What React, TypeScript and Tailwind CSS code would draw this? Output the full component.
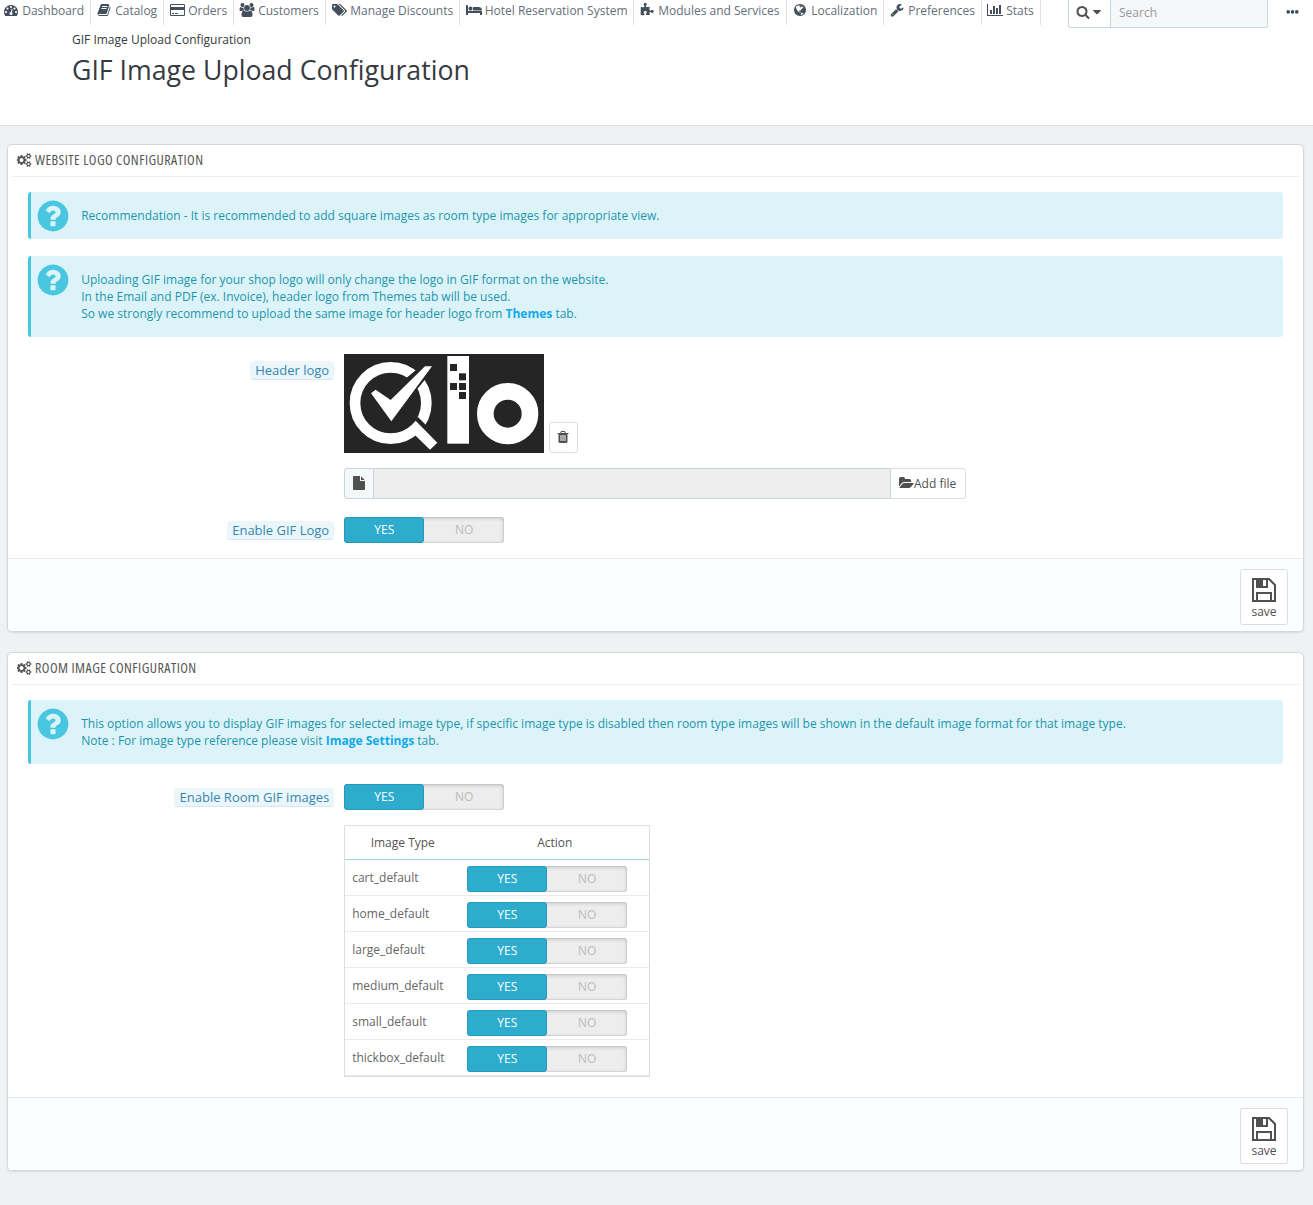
import type { ReactNode } from 'react';

const ICONS = {
  dashboard: { w: 1792, d: "M384 1152q0-53-37.5-90.5t-90.5-37.5-90.5 37.5-37.5 90.5 37.5 90.5 90.5 37.5 90.5-37.5 37.5-90.5zm192-448q0-53-37.5-90.5t-90.5-37.5-90.5 37.5-37.5 90.5 37.5 90.5 90.5 37.5 90.5-37.5 37.5-90.5zm428 481l101-382q6-26-7.5-48.5t-38.5-29.5-48 6.5-30 39.5l-101 382q-60 5-107 43.5t-63 98.5q-20 77 20 146t117 89 146-20 89-117q16-60-6-117t-72-91zm660-33q0-53-37.5-90.5t-90.5-37.5-90.5 37.5-37.5 90.5 37.5 90.5 90.5 37.5 90.5-37.5 37.5-90.5zm-640-640q0-53-37.5-90.5t-90.5-37.5-90.5 37.5-37.5 90.5 37.5 90.5 90.5 37.5 90.5-37.5 37.5-90.5zm448 192q0-53-37.5-90.5t-90.5-37.5-90.5 37.5-37.5 90.5 37.5 90.5 90.5 37.5 90.5-37.5 37.5-90.5zm320 448q0 261-141 483-19 29-54 29h-1402q-35 0-54-29-141-221-141-483 0-182 71-348t191-286 286-191 348-71 348 71 286 191 191 286 71 348z" },
  book: { w: 1792, d: "M1703 478q40 57 18 129l-275 906q-19 64-76.5 107.5t-122.5 43.5h-923q-77 0-148.5-53.5t-99.5-131.5q-24-67-2-127 0-4 3-27t4-37q1-8-3-21.5t-3-19.5q2-11 8-21t16.5-23.5 16.5-23.5q23-38 45-91.5t30-91.5q3-10 .5-30t-.5-28q3-11 17-28t17-23q21-36 42-92t25-90q1-9-2.5-32t.5-28q4-13 22-30.5t22-22.5q19-26 42.5-84.5t27.5-96.5q1-8-3-25.5t-2-26.5q2-8 9-18t18-23 17-21q8-12 16.5-30.5t15-35 16-36 19.5-32 26.5-23.5 36-11.5 47.5 5.5l-1 3q38-9 51-9h761q74 0 114 56t18 130l-274 906q-36 119-71.5 153.5t-128.5 34.5h-869q-27 0-38 15-11 16-1 43 24 70 144 70h923q29 0 56-15.5t35-41.5l300-987q7-22 5-57 38 15 59 43zm-1064 2q-4 13 2 22.5t20 9.5h608q13 0 25.5-9.5t16.5-22.5l21-64q4-13-2-22.5t-20-9.5h-608q-13 0-25.5 9.5t-16.5 22.5zm-83 256q-4 13 2 22.5t20 9.5h608q13 0 25.5-9.5t16.5-22.5l21-64q4-13-2-22.5t-20-9.5h-608q-13 0-25.5 9.5t-16.5 22.5z" },
  card: { w: 1920, d: "M1760 128q66 0 113 47t47 113v1216q0 66-47 113t-113 47h-1600q-66 0-113-47t-47-113v-1216q0-66 47-113t113-47h1600zm-1600 128q-13 0-22.5 9.5t-9.5 22.5v224h1664v-224q0-13-9.5-22.5t-22.5-9.5h-1600zm1600 1280q13 0 22.5-9.5t9.5-22.5v-608h-1664v608q0 13 9.5 22.5t22.5 9.5h1600zm-1504-128v-128h256v128h-256zm384 0v-128h384v128h-384z" },
  users: { w: 2048, d: "M657 896q-162 5-265 128h-134q-82 0-138-40.5t-56-118.5q0-353 124-353 6 0 43.5 21t97.5 42.5 119 21.5q67 0 133-23-5 37-5 66 0 159 90 287zm1071 637q0 120-73 189.5t-194 69.5h-874q-121 0-194-69.5t-73-189.5q0-53 3.5-103.5t14-109 26.5-108.5 43-97.5 62-81 85.5-53.5 111.5-20q10 0 43 21.5t73 48 107 48 135 21.5 135-21.5 107-48 73-48 43-21.5q61 0 111.5 20t85.5 53.5 62 81 43 97.5 26.5 108.5 14 109 3.5 103.5zm-1024-1277q0 106-75 181t-181 75-181-75-75-181 75-181 181-75 181 75 75 181zm704 384q0 159-112.5 271.5t-271.5 112.5-271.5-112.5-112.5-271.5 112.5-271.5 271.5-112.5 271.5 112.5 112.5 271.5zm576 225q0 78-56 118.5t-138 40.5h-134q-103-123-265-128 90-128 90-287 0-29-5-66 66 23 133 23 59 0 119-21.5t97.5-42.5 43.5-21q124 0 124 353zm-128-609q0 106-75 181t-181 75-181-75-75-181 75-181 181-75 181 75 75 181z" },
  tags: { w: 1920, d: "M448 448q0-53-37.5-90.5t-90.5-37.5-90.5 37.5-37.5 90.5 37.5 90.5 90.5 37.5 90.5-37.5 37.5-90.5zm1067 576q0 53-37 90l-491 492q-39 37-91 37-53 0-90-37l-715-716q-38-37-64.5-101t-26.5-117v-416q0-52 38-90t90-38h416q53 0 117 26.5t102 64.5l715 714q37 39 37 91zm384 0q0 53-37 90l-491 492q-39 37-91 37-36 0-59-14t-53-45l470-470q37-37 37-90 0-52-37-91l-715-714q-38-38-102-64.5t-117-26.5h224q53 0 117 26.5t102 64.5l715 714q37 39 37 91z" },
  bed: { w: 2048, d: "M256 1024h1728q26 0 45 19t19 45v448h-256v-256h-1536v256h-256v-1216q0-26 19-45t45-19h128q26 0 45 19t19 45v704zm576-320q0-106-75-181t-181-75-181 75-75 181 75 181 181 75 181-75 75-181zm1216 256v-64q0-159-112.5-271.5t-271.5-112.5h-704q-26 0-45 19t-19 45v384h1152z" },
  puzzle: { w: 1792, d: "M1755 1083q0 81-44.5 135t-123.5 54q-41 0-77.5-17.5t-59-38-56.5-38-71-17.5q-110 0-110 124 0 39 16 115t15 115v5q-22 0-33 1-34 3-97.5 11.5t-115.5 13.5-98 5q-61 0-103-26.5t-42-83.5q0-37 17.5-71t38-56.5 38-59 17.5-77.5q0-79-54-123.5t-135-44.5q-84 0-143 45.5t-59 127.5q0 43 15 83t33.5 64.5 33.5 53 15 50.5q0 45-46 89-37 35-117 35-95 0-245-24-9-2-27.5-4t-27.5-4l-13-2q-1 0-3-1-2 0-2-1v-1024q2 1 17.5 3.5t34 5 21.5 3.5q150 24 245 24 80 0 117-35 46-44 46-89 0-22-15-50.5t-33.5-53-33.5-64.5-15-83q0-82 59-127.5t144-45.5q80 0 134 44.5t54 123.5q0 41-17.5 77.5t-38 59-38 56.5-17.5 71q0 57 42 83.5t103 26.5q64 0 180-15t163-17v2q-1 2-3.5 17.5t-5 34-3.5 21.5q-24 150-24 245 0 80 35 117 44 46 89 46 22 0 50.5-15t53-33.5 64.5-33.5 83-15q82 0 127.5 59t45.5 143z" },
  globe: { w: 1792, d: "M896 128q209 0 385.5 103t279.5 279.5 103 385.5-103 385.5-279.5 279.5-385.5 103-385.5-103-279.5-279.5-103-385.5 103-385.5 279.5-279.5 385.5-103zm274 521q-2 1-9.5 9.5t-13.5 9.5q2 0 4.5-5t5-11 3.5-7q6-7 22-15 14-6 52-12 34-8 51 11-2-2 9.5-13t14.5-12q3-2 15-4.5t15-7.5l2-22q-12 1-17.5-7t-6.5-21q0 2-6 8 0-7-4.5-8t-11.5 1-9 1q-10-3-15-7.5t-8-16.5-4-15q-2-5-9.5-11t-9.5-10q-1-2-2.5-5.5t-3-6.5-4-5.5-5.5-2.5-7 5-7.5 10-4.5 5q-3-2-6-1.5t-4.5 1-4.5 3-5 3.5q-3 2-8.5 3t-8.5 2q15-5-1-11-10-4-16-3 9-4 7.5-12t-8.5-14h5q-1-4-8.5-8.5t-17.5-8.5-13-6q-8-5-34-9.5t-33-.5q-5 6-4.5 10.5t4 14 3.5 12.5q1 6-5.5 13t-6.5 12q0 7 14 15.5t10 21.5q-3 8-16 16t-16 12q-5 8-1.5 18.5t10.5 16.5q2 2 1.5 4t-3.5 4.5-5.5 4-6.5 3.5l-3 2q-11 5-20.5-6t-13.5-26q-7-25-16-30-23-8-29 1-5-13-41-26-25-9-58-4 6-1 0-15-7-15-19-12 3-6 4-17.5t1-13.5q3-13 12-23 1-1 7-8.5t9.5-13.5.5-6q35 4 50-11 5-5 11.5-17t10.5-17q9-6 14-5.5t14.5 5.5 14.5 5q14 1 15.5-11t-7.5-20q12 1 3-17-4-7-8-9-12-4-27 5-8 4 2 8-1-1-9.5 10.5t-16.5 17.5-16-5q-1-1-5.5-13.5t-9.5-13.5q-8 0-16 15 3-8-11-15t-24-8q19-12-8-27-7-4-20.5-5t-19.5 4q-5 7-5.5 11.5t5 8 10.5 5.5 11.5 4 8.5 3q14 10 8 14-2 1-8.5 3.5t-11.5 4.5-6 4q-3 4 0 14t-2 14q-5-5-9-17.5t-7-16.5q7 9-25 6l-10-1q-4 0-16 2t-20.5 1-13.5-8q-4-8 0-20 1-4 4-2-4-3-11-9.5t-10-8.5q-46 15-94 41 6 1 12-1 5-2 13-6.5t10-5.5q34-14 42-7l5-5q14 16 20 25-7-4-30-1-20 6-22 12 7 12 5 18-4-3-11.5-10t-14.5-11-15-5q-16 0-22 1-146 80-235 222 7 7 12 8 4 1 5 9t2.5 11 11.5-3q9 8 3 19 1-1 44 27 19 17 21 21 3 11-10 18-1-2-9-9t-9-4q-3 5 .5 18.5t10.5 12.5q-7 0-9.5 16t-2.5 35.5-1 23.5l2 1q-3 12 5.5 34.5t21.5 19.5q-13 3 20 43 6 8 8 9 3 2 12 7.5t15 10 10 10.5q4 5 10 22.5t14 23.5q-2 6 9.5 20t10.5 23q-1 0-2.5 1t-2.5 1q3 7 15.5 14t15.5 13q1 3 2 10t3 11 8 2q2-20-24-62-15-25-17-29-3-5-5.5-15.5t-4.5-14.5q2 0 6 1.5t8.5 3.5 7.5 4 2 3q-3 7 2 17.5t12 18.5 17 19 12 13q6 6 14 19.5t0 13.5q9 0 20 10.5t17 19.5q5 8 8 26t5 24q2 7 8.5 13.5t12.5 9.5l16 8 13 7q5 2 18.5 10.5t21.5 11.5q10 4 16 4t14.5-2.5 13.5-3.5q15-2 29 15t21 21q36 19 55 11-2 1 .5 7.5t8 15.5 9 14.5 5.5 8.5q5 6 18 15t18 15q6-4 7-9-3 8 7 20t18 10q14-3 14-32-31 15-49-18 0-1-2.5-5.5t-4-8.5-2.5-8.5 0-7.5 5-3q9 0 10-3.5t-2-12.5-4-13q-1-8-11-20t-12-15q-5 9-16 8t-16-9q0 1-1.5 5.5t-1.5 6.5q-13 0-15-1 1-3 2.5-17.5t3.5-22.5q1-4 5.5-12t7.5-14.5 4-12.5-4.5-9.5-17.5-2.5q-19 1-26 20-1 3-3 10.5t-5 11.5-9 7q-7 3-24 2t-24-5q-13-8-22.5-29t-9.5-37q0-10 2.5-26.5t3-25-5.5-24.5q3-2 9-9.5t10-10.5q2-1 4.5-1.5t4.5 0 4-1.5 3-6q-1-1-4-3-3-3-4-3 7 3 28.5-1.5t27.5 1.5q15 11 22-2 0-1-2.5-9.5t-.5-13.5q5 27 29 9 3 3 15.5 5t17.5 5q3 2 7 5.5t5.5 4.5 5-.5 8.5-6.5q10 14 12 24 11 40 19 44 7 3 11 2t4.5-9.5 0-14-1.5-12.5l-1-8v-18l-1-8q-15-3-18.5-12t1.5-18.5 15-18.5q1-1 8-3.5t15.5-6.5 12.5-8q21-19 15-35 7 0 11-9-1 0-5-3t-7.5-5-4.5-2q9-5 2-16 5-3 7.5-11t7.5-10q9 12 21 2 8-8 1-16 5-7 20.5-10.5t18.5-9.5q7 2 8-2t1-12 3-12q4-5 15-9t13-5l17-11q3-4 0-4 18 2 31-11 10-11-6-20 3-6-3-9.5t-15-5.5q3-1 11.5-.5t10.5-1.5q15-10-7-16-17-5-43 12zm-163 877q206-36 351-189-3-3-12.5-4.5t-12.5-3.5q-18-7-24-8 1-7-2.5-13t-8-9-12.5-8-11-7q-2-2-7-6t-7-5.5-7.5-4.5-8.5-2-10 1l-3 1q-3 1-5.5 2.5t-5.5 3-4 3 0 2.5q-21-17-36-22-5-1-11-5.5t-10.5-7-10-1.5-11.5 7q-5 5-6 15t-2 13q-7-5 0-17.5t2-18.5q-3-6-10.5-4.5t-12 4.5-11.5 8.5-9 6.5-8.5 5.5-8.5 7.5q-3 4-6 12t-5 11q-2-4-11.5-6.5t-9.5-5.5q2 10 4 35t5 38q7 31-12 48-27 25-29 40-4 22 12 26 0 7-8 20.5t-7 21.5q0 6 2 16z" },
  wrench: { w: 1792, d: "M448 1472q0-26-19-45t-45-19-45 19-19 45 19 45 45 19 45-19 19-45zm644-420l-682 682q-37 37-90 37-52 0-91-37l-106-108q-38-36-38-90 0-53 38-91l681-681q39 98 114.5 173.5t173.5 114.5zm634-435q0 39-23 106-47 134-164.5 217.5t-258.5 83.5q-185 0-316.5-131.5t-131.5-316.5 131.5-316.5 316.5-131.5q58 0 121.5 16.5t107.5 46.5q16 11 16 28t-16 28l-293 169v224l193 107q5-3 79-48.5t135.5-81 70.5-35.5q15 0 23.5 10t8.5 25z" },
  chart: { w: 2048, d: "M640 896v512h-256v-512h256zm384-512v1024h-256v-1024h256zm1024 1152v128h-2048v-1536h128v1408h1920zm-640-896v768h-256v-768h256zm384-384v1152h-256v-1152h256z" },
  search: { w: 1792, d: "M1216 832q0-185-131.5-316.5t-316.5-131.5-316.5 131.5-131.5 316.5 131.5 316.5 316.5 131.5 316.5-131.5 131.5-316.5zm512 832q0 52-38 90t-90 38q-54 0-90-38l-343-342q-179 124-399 124-143 0-273.5-55.5t-225-150-150-225-55.5-273.5 55.5-273.5 150-225 225-150 273.5-55.5 273.5 55.5 225 150 150 225 55.5 273.5q0 220-124 399l343 343q37 37 37 90z" },
  caret: { w: 1792, d: "M1408 704q0 26-19 45l-448 448q-19 19-45 19t-45-19l-448-448q-19-19-19-45t19-45 45-19h896q26 0 45 19t19 45z" },
  ellipsis: { w: 1792, d: "M576 736v192q0 40-28 68t-68 28h-192q-40 0-68-28t-28-68v-192q0-40 28-68t68-28h192q40 0 68 28t28 68zm512 0v192q0 40-28 68t-68 28h-192q-40 0-68-28t-28-68v-192q0-40 28-68t68-28h192q40 0 68 28t28 68zm512 0v192q0 40-28 68t-68 28h-192q-40 0-68-28t-28-68v-192q0-40 28-68t68-28h192q40 0 68 28t28 68z" },
  cogs: { w: 1920, d: "M832 896q0-106-75-181t-181-75-181 75-75 181 75 181 181 75 181-75 75-181zm768 512q0-52-38-90t-90-38-90 38-38 90q0 53 37.5 90.5t90.5 37.5 90.5-37.5 37.5-90.5zm0-1024q0-52-38-90t-90-38-90 38-38 90q0 53 37.5 90.5t90.5 37.5 90.5-37.5 37.5-90.5zm-384 421v185q0 10-7 19.5t-16 10.5l-155 24q-11 35-32 76 34 48 90 115 7 11 7 20 0 12-7 19-23 30-82.5 89.5t-78.5 59.5q-11 0-21-7l-115-90q-37 19-77 31-11 108-23 155-7 24-30 24h-186q-11 0-20-7.5t-10-17.5l-23-153q-34-10-75-31l-118 89q-7 7-20 7-11 0-21-8-144-133-144-160 0-9 7-19 10-14 41-53t47-61q-23-44-35-82l-152-24q-10-1-17-9.5t-7-19.5v-185q0-10 7-19.5t16-10.5l155-24q11-35 32-76-34-48-90-115-7-11-7-20 0-12 7-20 22-30 82-89t79-59q11 0 21 7l115 90q34-18 77-32 11-108 23-154 7-24 30-24h186q11 0 20 7.5t10 17.5l23 153q34 10 75 31l118-89q8-7 20-7 11 0 21 8 144 133 144 160 0 8-7 19-12 16-42 54t-45 60q23 48 34 82l152 23q10 2 17 10.5t7 19.5zm640 533v140q0 16-149 31-12 27-30 52 51 113 51 138 0 4-4 7-122 71-124 71-8 0-46-47t-52-68q-20 2-30 2t-30-2q-14 21-52 68t-46 47q-2 0-124-71-4-3-4-7 0-25 51-138-18-25-30-52-149-15-149-31v-140q0-16 149-31 13-29 30-52-51-113-51-138 0-4 4-7 4-2 35-20t59-34 30-16q8 0 46 46.5t52 67.5q20-2 30-2t30 2q51-71 92-112l6-2q4 0 124 70 4 3 4 7 0 25-51 138 17 23 30 52 149 15 149 31zm0-1024v140q0 16-149 31-12 27-30 52 51 113 51 138 0 4-4 7-122 71-124 71-8 0-46-47t-52-68q-20 2-30 2t-30-2q-14 21-52 68t-46 47q-2 0-124-71-4-3-4-7 0-25 51-138-18-25-30-52-149-15-149-31v-140q0-16 149-31 13-29 30-52-51-113-51-138 0-4 4-7 4-2 35-20t59-34 30-16q8 0 46 46.5t52 67.5q20-2 30-2t30 2q51-71 92-112l6-2q4 0 124 70 4 3 4 7 0 25-51 138 17 23 30 52 149 15 149 31z" },
  question: { w: 1792, d: "M1024 1376v-192q0-14-9-23t-23-9h-192q-14 0-23 9t-9 23v192q0 14 9 23t23 9h192q14 0 23-9t9-23zm256-672q0-88-55.5-163t-138.5-116-170-41q-243 0-371 213-15 24 8 42l132 100q7 6 19 6 16 0 25-12 53-68 86-92 34-24 86-24 48 0 85.5 26t37.5 59q0 38-20 61t-68 45q-63 28-115.5 86.5t-52.5 125.5v36q0 14 9 23t23 9h192q14 0 23-9t9-23q0-19 21.5-49.5t54.5-49.5q32-18 49-28.5t46-35 44.5-48 28-60.5 12.5-81zm384 192q0 209-103 385.5t-279.5 279.5-385.5 103-385.5-103-279.5-279.5-103-385.5 103-385.5 279.5-279.5 385.5-103 385.5 103 279.5 279.5 103 385.5z" },
  trash: { w: 1792, d: "M704 1376v-704q0-14-9-23t-23-9h-64q-14 0-23 9t-9 23v704q0 14 9 23t23 9h64q14 0 23-9t9-23zm256 0v-704q0-14-9-23t-23-9h-64q-14 0-23 9t-9 23v704q0 14 9 23t23 9h64q14 0 23-9t9-23zm256 0v-704q0-14-9-23t-23-9h-64q-14 0-23 9t-9 23v704q0 14 9 23t23 9h64q14 0 23-9t9-23zm-544-992h448l-48-117q-7-9-17-11h-317q-10 2-17 11zm928 32v64q0 14-9 23t-23 9h-96v948q0 83-47 143.5t-113 60.5h-832q-66 0-113-58.5t-47-141.5v-952h-96q-14 0-23-9t-9-23v-64q0-14 9-23t23-9h309l70-167q15-37 54-63t79-26h320q40 0 79 26t54 63l70 167h309q14 0 23 9t9 23z" },
  file: { w: 1792, d: "M1152 512v-472q22 14 36 28l408 408q14 14 28 36h-472zm-128 32q0 40 28 68t68 28h544v1056q0 40-28 68t-68 28h-1344q-40 0-68-28t-28-68v-1600q0-40 28-68t68-28h800v544z" },
  folder: { w: 1920, d: "M1879 952q0 31-31 66l-336 396q-43 51-120.5 86.5t-143.5 35.5h-1088q-34 0-60.5-13t-26.5-43q0-31 31-66l336-396q43-51 120.5-86.5t143.5-35.5h1088q34 0 60.5 13t26.5 43zm-343-344v160h-832q-94 0-197 47.5t-164 119.5l-337 396-5 6q0-4-.5-12.5t-.5-12.5v-960q0-92 66-158t158-66h320q92 0 158 66t66 158v32h544q92 0 158 66t66 158z" },
};

type IconName = keyof typeof ICONS;

const Icon = ({ name, size = 14, className = '' }: { name: IconName; size?: number; className?: string }) => {
  const { w, d } = ICONS[name];
  return (
    <svg viewBox={`0 0 ${w} 1792`} width={(size * w) / 1792} height={size} fill="currentColor" className={`shrink-0 ${className}`}>
      <path d={d} />
    </svg>
  );
};

const NAV: { icon: IconName; label: string; cls: string }[] = [
  { icon: 'dashboard', label: 'Dashboard', cls: 'w-[91px] pl-1' },
  { icon: 'book', label: 'Catalog', cls: 'w-[73px] pl-1.5' },
  { icon: 'card', label: 'Orders', cls: 'w-[70px] pl-1.5' },
  { icon: 'users', label: 'Customers', cls: 'w-[92px] pl-1.5' },
  { icon: 'tags', label: 'Manage Discounts', cls: 'w-[134px] pl-1.5' },
  { icon: 'bed', label: 'Hotel Reservation System', cls: 'w-[174px] pl-[6.5px]' },
  { icon: 'puzzle', label: 'Modules and Services', cls: 'w-[153px] pl-1.5' },
  { icon: 'globe', label: 'Localization', cls: 'w-[97px] pl-1.5' },
  { icon: 'wrench', label: 'Preferences', cls: 'w-[98px] pl-1.5' },
  { icon: 'chart', label: 'Stats', cls: 'w-[59px] pl-1.5' },
];

const IMAGE_TYPES = ['cart_default', 'home_default', 'large_default', 'medium_default', 'small_default', 'thickbox_default'];

const Toggle = () => (
  <div className="flex h-[26px] w-40 rounded-[3px] bg-[#ededed] text-center leading-[25px] shadow-[inset_0_0_0_1px_rgba(0,0,0,0.05),inset_0_1px_4px_rgba(0,0,0,0.2)]">
    <span className="w-20 rounded-[3px] border border-[#2799b8] bg-[#2eacce] pl-[0.5px] leading-[23px] text-white">YES</span>
    <span className="w-20 pl-[0.5px] text-[#bbb]">NO</span>
  </div>
);

const Alert = ({ children }: { children: ReactNode }) => (
  <div className="mx-5 flex rounded-[3px] border-l-[3px] border-[#4ac7e0] bg-[#dcf4f9] text-[#1e94ab]">
    <Icon name="question" size={36} className="mt-1.5 ml-1 text-[#4ac7e0]" />
    <div className="py-[15px] pl-[10.2px] leading-[17px] tracking-[0.005px]">{children}</div>
  </div>
);

const AlertLink = ({ children }: { children: ReactNode }) => <a className="font-bold text-[#12a8ec]">{children}</a>;

const Label = ({ children }: { children: ReactNode }) => (
  <div className="flex w-[326px] shrink-0 justify-end">
    <label className="h-[19px] rounded-[3px] border-b border-[#d3eaf5] bg-[#ebf6fb] pr-[4.8px] pl-[5.2px] text-[13px] leading-[18px] text-[#3586ae]">{children}</label>
  </div>
);

const SaveIcon = () => (
  <svg viewBox="0 0 24 24" width="24" height="24" fill="none" stroke="currentColor" strokeWidth="2">
    <path d="M1 1h16l6 6v16H1z" />
    <path d="M5 1v8h10V1" />
    <path d="M5 1h5v8H5z" fill="currentColor" />
    <path d="M5 23v-8h14v8" />
  </svg>
);

const Panel = ({ title, children }: { title: string; children: ReactNode }) => (
  <section className="overflow-hidden rounded-[5px] border border-[#d3d8db] bg-white shadow-[0_1px_2px_rgba(0,0,0,0.1)]">
    <h3 className="mx-1 flex h-8 items-center gap-[3px] border-b border-[#eaedef] pb-px pl-[5px] text-[#555]">
      <Icon name="cogs" />
      <span className="text-sm leading-none font-medium tracking-[0.46px] whitespace-nowrap [font-stretch:75%]">{title}</span>
    </h3>
    {children}
    <footer className="flex h-[73px] justify-end border-t border-[#e8eaec] bg-[#fcfdfe] pt-2.5 pr-[15px]">
      <button className="flex h-14 w-12 flex-col items-center rounded-[3px] border border-[#ddd] bg-white pt-2 text-[#505050]">
        <SaveIcon />
        <span className="mt-px leading-[17px]">save</span>
      </button>
    </footer>
  </section>
);

// Qlo wordmark: magnifier with a tick, a tower and a ring
const Logo = () => (
  <svg viewBox="0 0 600 297" width="200" height="99" className="shrink-0">
    <rect width="600" height="297" fill="#252525" />
    <circle cx="140" cy="147" r="107" fill="none" stroke="#fff" strokeWidth="32" />
    <path d="M221 188l34 34-14 14-41-20z" fill="#252525" />
    <path d="M215 200l65 66-22 21-43-42-30-12z" fill="#fff" />
    <path d="M186 73l30-25 27-22 40 10-41 42-22 27-18-5z" fill="#252525" />
    <path d="M81 118l14-11 45 31L243 37h21L142 202z" fill="#fff" />
    <rect x="310" y="6" width="65" height="263" fill="#fff" />
    <g fill="#252525">
      <rect x="318" y="30" width="21" height="21" />
      <rect x="345" y="58" width="21" height="21" />
      <rect x="318" y="87" width="21" height="21" />
      <rect x="345" y="87" width="21" height="21" />
      <rect x="345" y="114" width="21" height="21" />
    </g>
    <circle cx="491" cy="179" r="67" fill="none" stroke="#fff" strokeWidth="50" />
  </svg>
);

const TopBar = () => (
  <div className="flex h-7">
    <nav className="flex h-[25px] text-[#656e7a]">
      {NAV.map(({ icon, label, cls }) => (
        <a key={label} className={`flex shrink-0 items-center border-r border-[#e1e1e1] pb-1 whitespace-nowrap ${cls}`}>
          <span className="mr-[3.2px] flex w-[15px] shrink-0 justify-center pr-px pb-px text-[#454f5b]"><Icon name={icon} /></span>
          {label}
        </a>
      ))}
    </nav>
    <div className="ml-[27px] flex h-7 w-[200px] overflow-hidden rounded-b-[3px] border border-t-0 border-[#c7d6db]">
      <button className="flex w-[42px] items-center justify-center border-r border-[#c7d6db] pb-[3px] pl-px text-[#505050]">
        <Icon name="search" />
        <Icon name="caret" />
      </button>
      <input placeholder="Search" className="min-w-0 flex-1 bg-[#f5f8f9] pb-px pl-2 outline-none placeholder:text-[#999]" />
    </div>
    <button className="mt-[4.5px] ml-[17px] h-3.5 text-[#2c4a63]"><Icon name="ellipsis" size={15} /></button>
  </div>
);

export default function App() {
  return (
    <div className="min-h-[1205px] w-[1313px] bg-[#eff1f2] font-['Open_Sans',sans-serif] text-xs text-[#555]">
      <header className="h-[126px] border-b border-[#ddd] bg-white">
        <TopBar />
        <div className="pt-[3px] pl-[72px] text-[#363a41]">
          <div className="leading-[17px]">GIF Image Upload Configuration</div>
          <h1 className="mt-1 text-[26.7px] leading-[36px]">GIF Image Upload Configuration</h1>
        </div>
      </header>

      <main className="flex flex-col gap-5 pt-[18px] pr-[9px] pl-[7px]">
        <Panel title="WEBSITE LOGO CONFIGURATION">
          <div className="flex h-[381px] flex-col pt-[15px]">
            <Alert>Recommendation - It is recommended to add square images as room type images for appropriate view.</Alert>
            <div className="h-[17px] shrink-0" />
            <Alert>
              Uploading GIF image for your shop logo will only change the logo in GIF format on the website.<br />
              In the Email and PDF (ex. Invoice), header logo from Themes tab will be used.<br />
              So we strongly recommend to upload the same image for header logo from <AlertLink>Themes</AlertLink> tab.
            </Alert>
            <div className="mt-[17px] flex gap-2.5">
              <div className="pt-[7px]"><Label>Header logo</Label></div>
              <div>
                <div className="flex items-end gap-[5px]">
                  <Logo />
                  <button className="flex h-[31px] w-[29px] items-center justify-center rounded-[3px] border border-[#ddd] bg-white pr-px pb-px text-[#505050]">
                    <Icon name="trash" />
                  </button>
                </div>
                <div className="mt-[15px] flex h-[31px] w-[622px]">
                  <span className="flex w-[30px] items-center justify-center rounded-l-[3px] border border-[#c7d6db] bg-[#f5f8f9] pb-px text-[#505050]">
                    <Icon name="file" />
                  </span>
                  <span className="flex-1 border-y border-[#c7d6db] bg-[#eee]" />
                  <button className="flex w-[76px] items-center rounded-r-[3px] border border-[#ddd] border-l-[#c7d6db] pl-2 whitespace-nowrap text-[#505050]">
                    <Icon name="folder" className="mb-px" />Add file
                  </button>
                </div>
              </div>
            </div>
            <div className="mt-[18px] flex gap-2.5">
              <div className="pt-1"><Label>Enable GIF Logo</Label></div>
              <Toggle />
            </div>
          </div>
        </Panel>

        <Panel title="ROOM IMAGE CONFIGURATION">
          <div className="flex h-[412px] flex-col pt-[15px]">
            <Alert>
              This option allows you to display GIF images for selected image type, if specific image type is disabled then room type images will be shown in the default image format for that image type.<br />
              Note : For image type reference please visit <AlertLink>Image Settings</AlertLink> tab.
            </Alert>
            <div className="mt-5 flex gap-2.5">
              <div className="pt-1"><Label>Enable Room GIF images</Label></div>
              <Toggle />
            </div>
            <div className="mt-[15px] ml-[336px] w-[306px] border border-[#ddd]">
              <div className="flex h-[34px] items-center border-b border-[#a0d0eb]">
                <span className="w-[115.5px] text-center">Image Type</span>
                <span className="flex-1 text-center">Action</span>
              </div>
              {IMAGE_TYPES.map((type) => (
                <div key={type} className="flex h-9 items-center border-b border-[#e8eaec] text-[#666]">
                  <span className="w-[122px] pl-[7.2px]">{type}</span>
                  <div className="pt-0.5"><Toggle /></div>
                </div>
              ))}
            </div>
          </div>
        </Panel>
      </main>
    </div>
  );
}
